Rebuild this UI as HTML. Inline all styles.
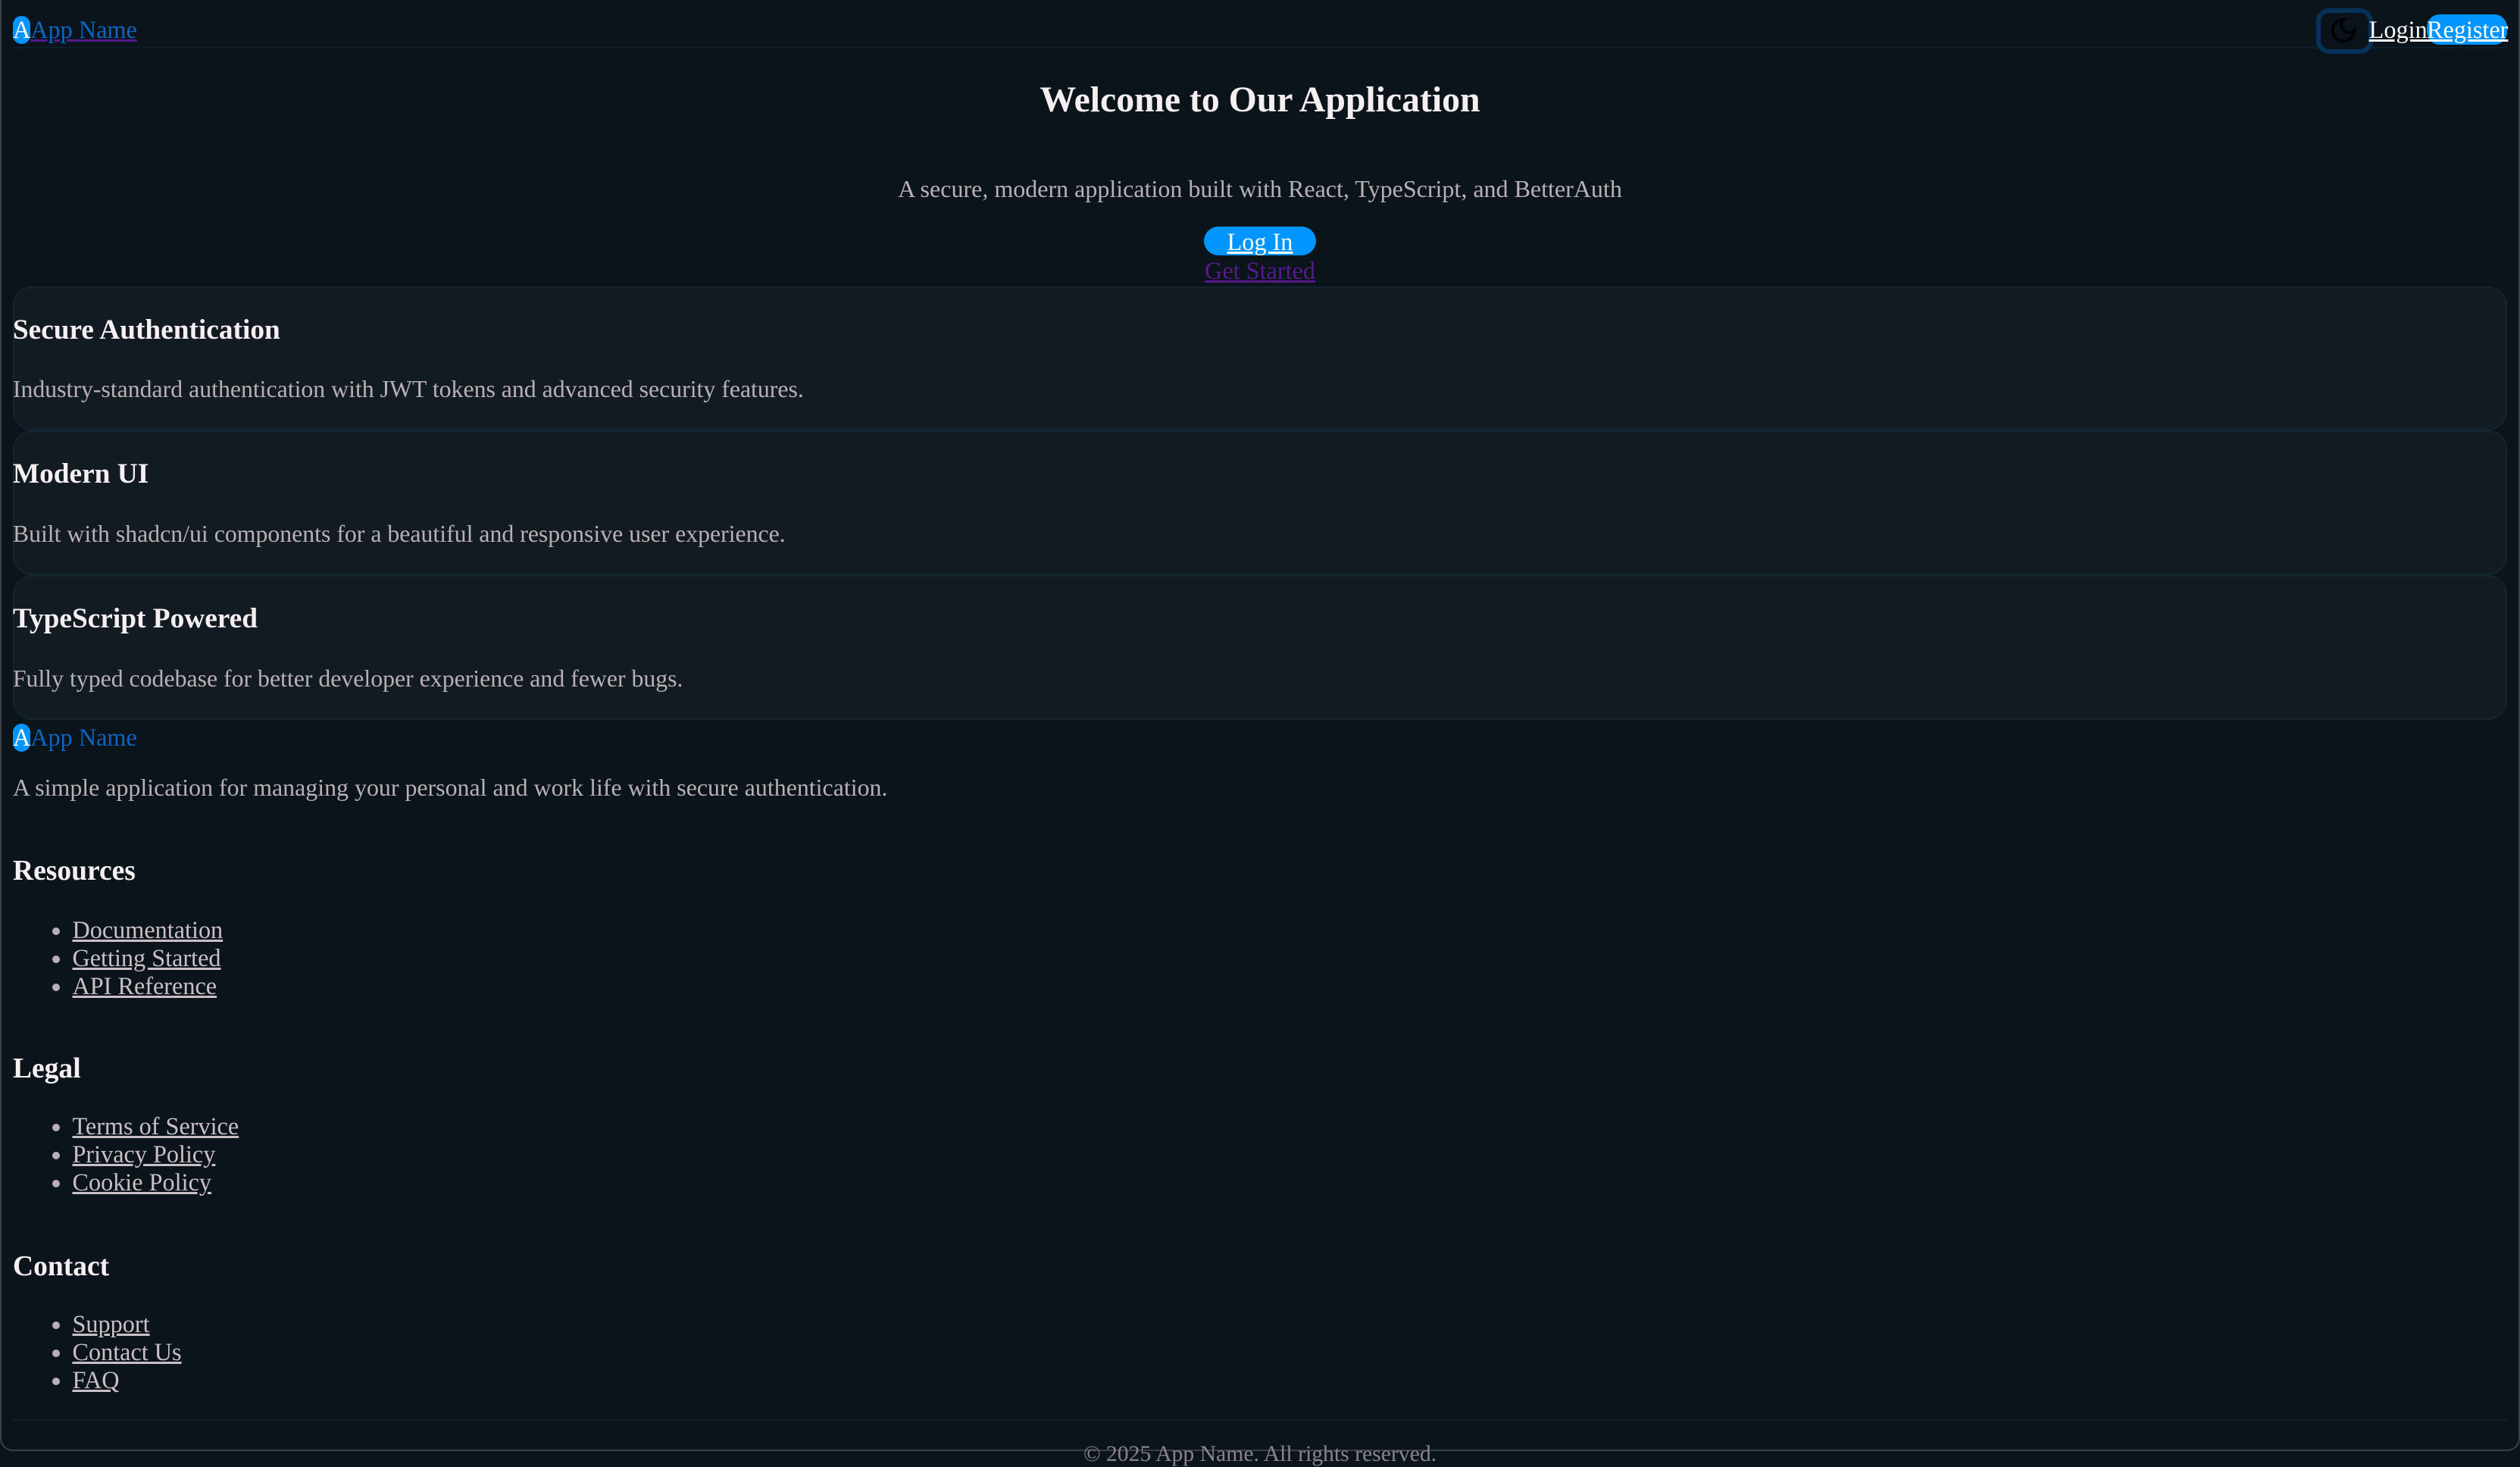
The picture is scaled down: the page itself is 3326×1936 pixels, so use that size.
<!DOCTYPE html>
<html><head><meta charset="utf-8"><style>
html,body{margin:0;padding:0;background:#0b141b;}
body{width:3326px;height:1916px;overflow:hidden;position:relative;}
#w{zoom:2.1212;position:absolute;left:0;top:0;width:1568px;height:903px;font-family:"Liberation Serif",serif;font-size:15.2px;color:#b9b0b5;}
.frame{position:absolute;left:0;top:0;width:1566px;height:902px;border:1px solid #3a4045;border-top:none;border-radius:0 0 8px 8px;background:#0b141b;}
.a{position:absolute;white-space:nowrap;}
.hdr{position:absolute;left:8px;top:29px;width:1552px;height:1px;background:#0f1f2a;}
.logo{color:#0a66c2;text-decoration:underline;text-decoration-color:#551a8b;}
.badge{display:inline-block;background:#0095ff;color:#fff;border-radius:9px;}
.card{position:absolute;left:8px;width:1550px;height:88px;border:1px solid #15252f;border-radius:12px;background:#131b22;}
.card h3{position:absolute;left:-1px;top:16px;margin:0;font-size:17.6px;color:#f5eff2;}
.card p{position:absolute;left:-1px;top:55px;margin:0;font-size:15px;}
h4{margin:0;font-size:17.7px;color:#f5eff2;}
ul{margin:0;padding-left:37px;line-height:17.5px;font-size:15.2px;}
ul a{color:#c9bfc4;text-decoration:underline;}
</style></head><body><div id="w">
<div class="frame"></div>
<div class="a" style="left:8px;top:10px;"><span class="logo"><span class="badge">A</span>App Name</span></div>
<div class="hdr"></div>
<div class="a" style="left:1441px;top:5px;width:30px;height:23px;border:3px solid #06325a;border-radius:8px;background:#0a121a;"></div>
<svg class="a" style="left:1449px;top:10px" width="18" height="18" viewBox="0 0 24 24"><path d="M12 3a6 6 0 0 0 9 9 9 9 0 1 1-9-9z" fill="none" stroke="#000" stroke-width="2.4"/></svg>
<div class="a" style="left:1474px;top:10px;color:#fff;text-decoration:underline;">Login</div>
<div class="a" style="left:1510px;top:9px;width:50px;height:19px;background:#0095ff;border-radius:8px;"></div>
<div class="a" style="left:1510px;top:10px;color:#fff;text-decoration:underline;">Register</div>
<div class="a" style="left:0;width:1568px;top:49px;text-align:center;font-size:22.5px;font-weight:bold;color:#f5eff2;">Welcome to Our Application</div>
<div class="a" style="left:0;width:1568px;top:109px;text-align:center;font-size:15.1px;">A secure, modern application built with React, TypeScript, and BetterAuth</div>
<div class="a" style="left:749px;top:141px;width:70px;height:18px;background:#0095ff;border-radius:10px;"></div>
<div class="a" style="left:749px;width:70px;top:142px;text-align:center;color:#fff;text-decoration:underline;font-size:15.2px;">Log In</div>
<div class="a" style="left:749px;width:70px;top:160px;text-align:center;color:#551a8b;text-decoration:underline;font-size:15.2px;">Get Started</div>
<div class="card" style="top:178px"><h3>Secure Authentication</h3><p>Industry-standard authentication with JWT tokens and advanced security features.</p></div>
<div class="card" style="top:268px"><h3>Modern UI</h3><p>Built with shadcn/ui components for a beautiful and responsive user experience.</p></div>
<div class="card" style="top:358px"><h3>TypeScript Powered</h3><p>Fully typed codebase for better developer experience and fewer bugs.</p></div>
<div class="a" style="left:8px;top:450px;"><span class="logo" style="text-decoration:none"><span class="badge">A</span>App Name</span></div>
<div class="a" style="left:8px;top:482px;font-size:15.05px;">A simple application for managing your personal and work life with secure authentication.</div>
<div class="a" style="left:8px;top:532px;"><h4>Resources</h4></div>
<div class="a" style="left:8px;top:570px;"><ul><li><a>Documentation</a></li><li><a>Getting Started</a></li><li><a>API Reference</a></li></ul></div>
<div class="a" style="left:8px;top:655px;"><h4>Legal</h4></div>
<div class="a" style="left:8px;top:692px;"><ul><li><a>Terms of Service</a></li><li><a>Privacy Policy</a></li><li><a>Cookie Policy</a></li></ul></div>
<div class="a" style="left:8px;top:778px;"><h4>Contact</h4></div>
<div class="a" style="left:8px;top:815px;"><ul><li><a>Support</a></li><li><a>Contact Us</a></li><li><a>FAQ</a></li></ul></div>
<div class="a" style="left:8px;top:883px;width:1552px;height:1px;background:#0f1f2a;"></div>
<div class="a" style="left:0;width:1568px;top:897px;text-align:center;font-size:14px;color:#8a8489;">© 2025 App Name. All rights reserved.</div>
</div></body></html>
